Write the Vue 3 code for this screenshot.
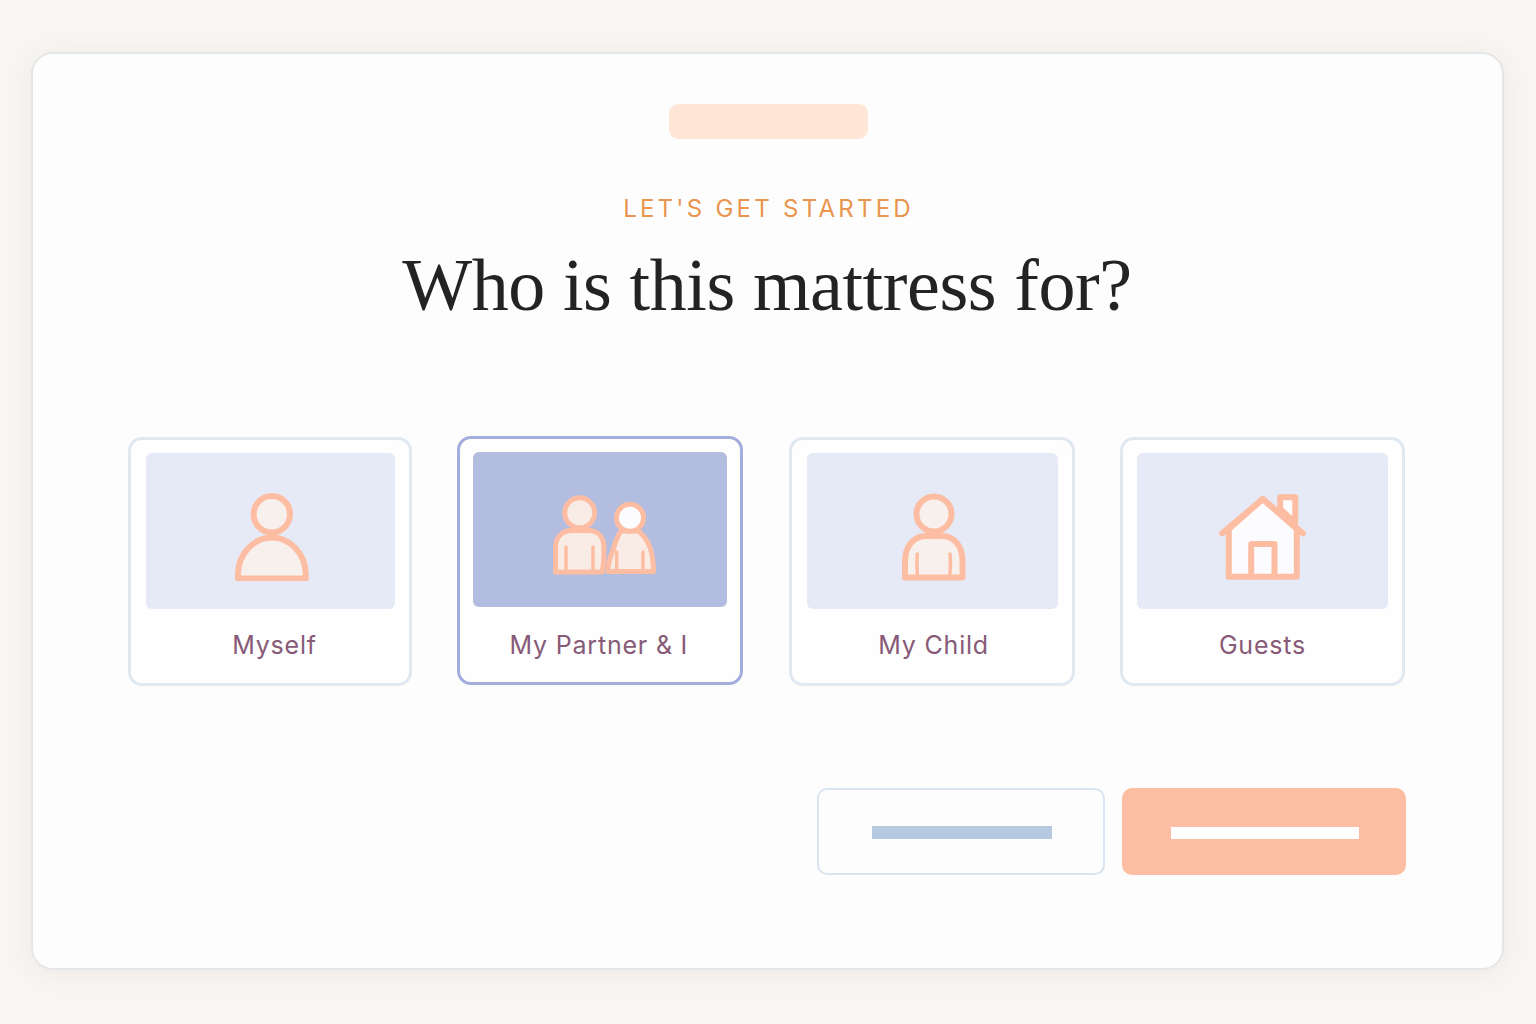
<script setup>
const options = [
  { key: 'self', label: 'Myself' },
  { key: 'partner', label: 'My Partner & I', selected: true },
  { key: 'child', label: 'My Child' },
  { key: 'guests', label: 'Guests' }
]
</script>

<template>
  <div class="page">
    <main class="panel">
      <div class="pill"></div>
      <p class="eyebrow">LET'S GET STARTED</p>
      <h1 class="title">Who is this mattress for?</h1>
      <section class="options">
        <div
          v-for="o in options"
          :key="o.key"
          class="option"
          :class="[`option-${o.key}`, { selected: o.selected }]"
        >
          <div class="thumb">
            <svg class="icon" viewBox="0 0 120 100" width="120" height="100" aria-hidden="true">
              <g v-if="o.key === 'self'" class="line">
                <path class="soft" d="M27 97.5V93C27 73 43 56.5 61 56.5S94.7 73 94.7 93V97.5Z" />
                <circle class="soft" cx="60.8" cy="33.3" r="18.2" />
              </g>
              <g v-else-if="o.key === 'partner'" class="line thin">
                <path class="soft" d="M15.5 92V68C15.5 57 22 50.5 32 50.5H48C58 50.5 64 57 64 68C64 77 64 85 62 92Z" />
                <path class="arm" d="M26 67V91M53 67V91" />
                <path class="soft" d="M68 91.5C68 83 70 77 73 70C75 63 77 56 81 51H98C108 58 113.5 72 113.5 91.5Z" />
                <path class="arm" d="M76.7 72V91M103 72V91" />
                <circle class="soft" cx="39.7" cy="32.8" r="15" />
                <circle class="bright" cx="90" cy="37.8" r="13.5" />
              </g>
              <g v-else-if="o.key === 'child'" class="line">
                <path class="soft" d="M33 96.5V80C33 65 42 55 54 55H70C82 55 90.5 65 90.5 80V96.5Z" />
                <path class="arm" d="M45.3 73C44.5 80 45.3 88 45.3 96M78 73C79 80 78 88 78 96" />
                <circle class="soft" cx="62" cy="33" r="17.5" />
              </g>
              <g v-else class="line">
                <path class="bright" d="M78.2 28V16.3H93.2V42L78.2 28Z" />
                <path class="bright" d="M26.8 48V95.7H94.8V48L60.8 18Z" />
                <path d="M20.2 52.3L60.8 18L100.8 52.3" />
                <path d="M49.2 95.7V63H72.5V95.7" />
              </g>
            </svg>
          </div>
          <span class="label">{{ o.label }}</span>
        </div>
      </section>
      <footer class="actions">
        <div class="btn btn-ghost"><span class="bar"></span></div>
        <div class="btn btn-solid"><span class="bar"></span></div>
      </footer>
    </main>
  </div>
</template>

<style>
html, body { margin: 0; background: #f8f5f2; }
</style>

<style scoped>
.page {
  width: 1536px;
  height: 1024px;
  box-sizing: border-box;
  padding: 52px 32px 54px 31px;
  background: #f8f5f2;
  overflow: hidden;
}
.panel {
  box-sizing: border-box;
  height: 918px;
  display: flex;
  flex-direction: column;
  align-items: center;
  padding: 50px 96px 0 95px;
  background: #fdfdfd;
  border: 2px solid #e5e6e8;
  border-radius: 22px;
  box-shadow: 0 4px 26px rgba(120, 110, 100, 0.08);
}
.pill {
  width: 199px;
  height: 35px;
  margin-left: 2px;
  border-radius: 9px;
  background: #ffe6d6;
}
.eyebrow {
  margin: 55px 0 0 3px;
  font: 400 24px/30px "Inter", "Liberation Sans", sans-serif;
  letter-spacing: 3.25px;
  color: #e9954f;
}
.title {
  margin: 19px 0 0;
  font: 400 74px/84px "Liberation Serif", serif;
  color: #232323;
  letter-spacing: -0.42px;
}
.options {
  width: 100%;
  margin-top: 110px;
  display: grid;
  grid-template-columns: 284px 286px 286px 285px;
  column-gap: 45.33px;
}
.option {
  box-sizing: border-box;
  height: 249px;
  padding: 13px 14px 0 15px;
  display: flex;
  flex-direction: column;
  align-items: center;
  background: #fefefe;
  border: 3px solid #e0e8f2;
  border-radius: 14px;
}
.option.selected {
  margin-top: -1px;
  margin-bottom: 1px;
  padding: 13px 13px 0;
  border-color: #a3aedd;
}
.option-guests { padding: 13px 14px 0; }
.thumb {
  width: 100%;
  height: 156px;
  flex: none;
  display: flex;
  align-items: center;
  justify-content: center;
  border-radius: 6px;
  background: #e6eaf6;
}
.selected .thumb { height: 155px; background: #b2bde0; }
.label {
  margin-top: 19px;
  font: 400 25px/34px "Inter", "Liberation Sans", sans-serif;
  letter-spacing: 0.8px;
  color: #875a78;
}
.selected .label { margin-top: 21px; margin-right: 3px; }
.option-self .label { margin-left: 8px; }
.option-child .label { margin-left: 3px; }
.line { stroke: #fdbda2; stroke-width: 6; stroke-linejoin: round; stroke-linecap: round; fill: none; }
.line.thin { stroke-width: 5; }
.soft { fill: #f7f0ec; }
.selected .soft { fill: #f9ece7; }
.bright { fill: #fcfcfe; }
.arm { stroke-width: 3.5; fill: none; }
.actions {
  width: 100%;
  margin-top: 102px;
  display: flex;
  justify-content: flex-end;
  gap: 17px;
}
.btn {
  box-sizing: border-box;
  height: 87px;
  display: flex;
  align-items: center;
  justify-content: center;
  border-radius: 10px;
}
.btn .bar { display: block; height: 12px; margin: 2px 0 0 2px; }
.btn-ghost {
  width: 288px;
  border: 2px solid #d9e4f1;
}
.btn-ghost .bar { width: 180px; height: 13px; background: #b6c9e1; }
.btn-solid {
  width: 284px;
  background: #febea4;
}
.btn-solid .bar { width: 188px; background: #fff; }
</style>
